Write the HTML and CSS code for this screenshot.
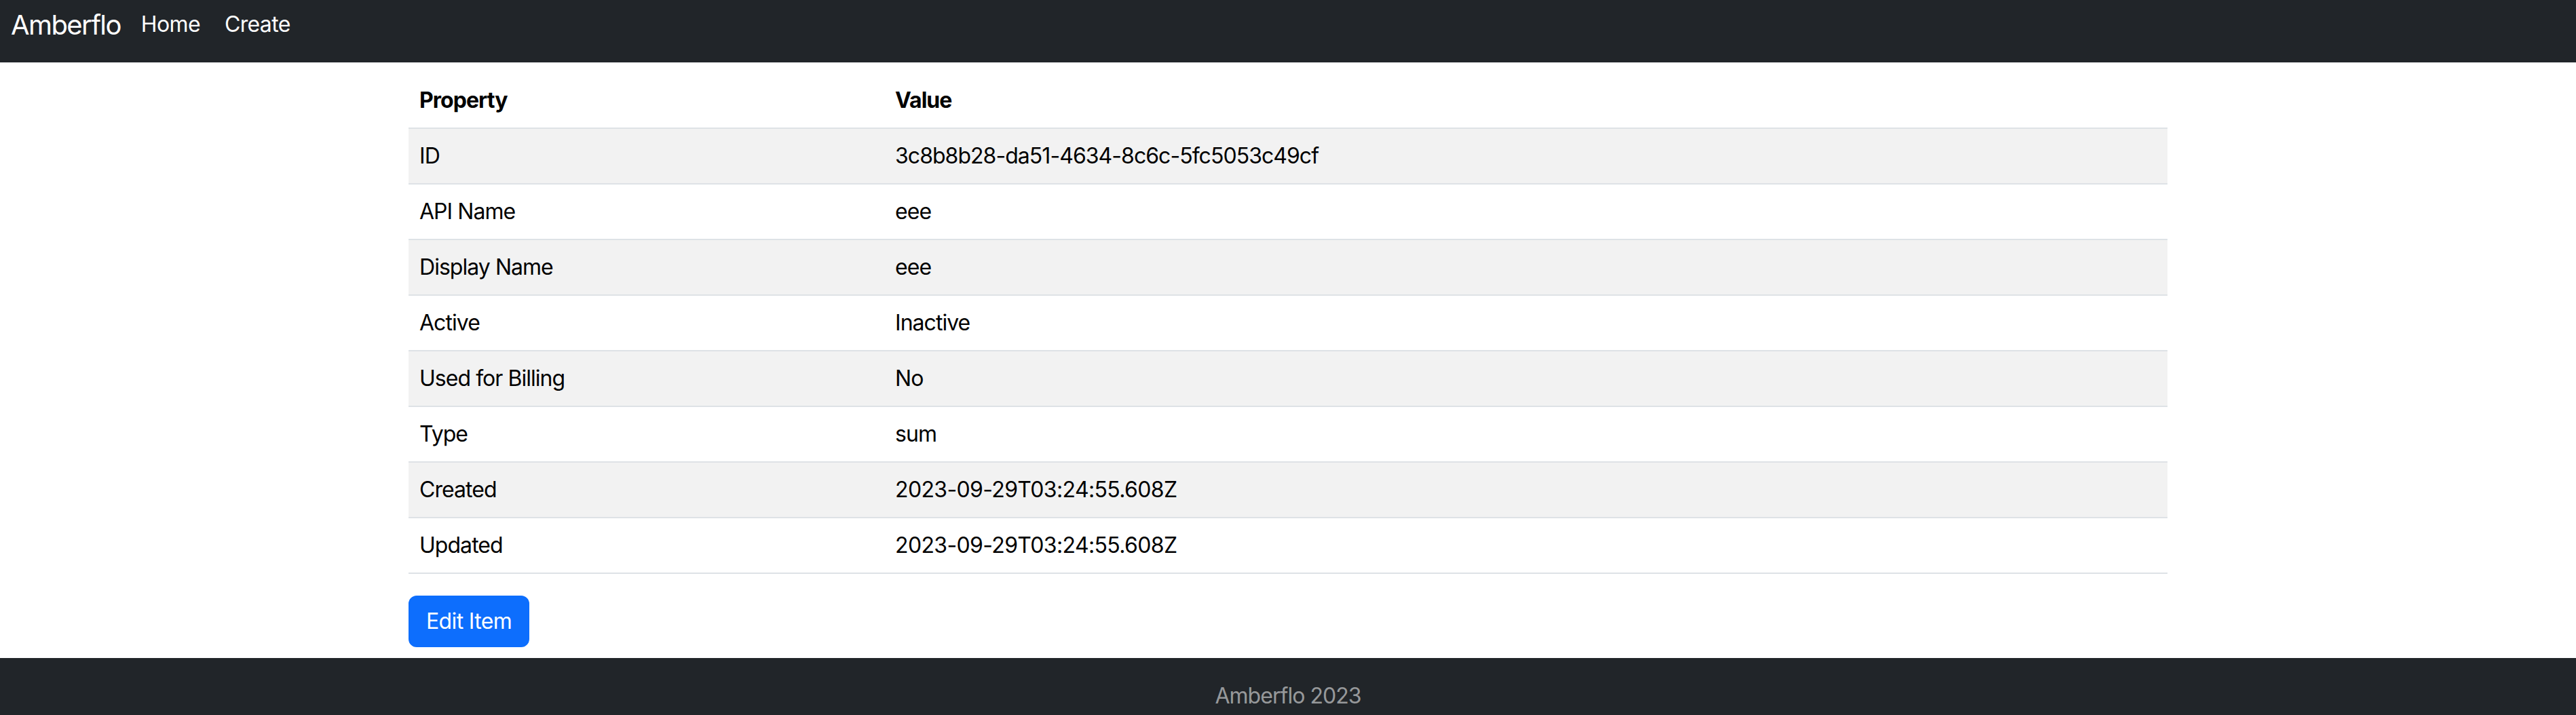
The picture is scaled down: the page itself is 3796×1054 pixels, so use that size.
FILE: index.html
```html
<!DOCTYPE html>
<html lang="en">
<head>
<meta charset="utf-8">
<title>Amberflo</title>
<link rel="stylesheet" href="styles.css">
</head>
<body>
<nav class="navbar">
  <a class="brand" href="#">Amberflo</a>
  <div class="nav-links">
    <a class="nav-link" href="#">Home</a>
    <a class="nav-link" href="#">Create</a>
  </div>
</nav>
<main class="container">
  <table class="table">
    <thead>
      <tr><th class="col-prop">Property</th><th>Value</th></tr>
    </thead>
    <tbody>
      <tr class="odd"><td>ID</td><td>3c8b8b28-da51-4634-8c6c-5fc5053c49cf</td></tr>
      <tr><td>API Name</td><td>eee</td></tr>
      <tr class="odd"><td>Display Name</td><td>eee</td></tr>
      <tr><td>Active</td><td>Inactive</td></tr>
      <tr class="odd"><td>Used for Billing</td><td>No</td></tr>
      <tr><td>Type</td><td>sum</td></tr>
      <tr class="odd"><td>Created</td><td class="num">2023-09-29T03:24:55.608Z</td></tr>
      <tr><td>Updated</td><td class="num">2023-09-29T03:24:55.608Z</td></tr>
    </tbody>
  </table>
  <button class="btn" type="button">Edit Item</button>
</main>
<footer class="footer">Amberflo 2023</footer>
</body>
</html>
```

FILE: styles.css
```css
* { box-sizing: border-box; }
html, body { margin: 0; padding: 0; }
body {
  font-family: Inter, "Liberation Sans", Arial, sans-serif;
  font-size: 32px;
  line-height: 48px;
  letter-spacing: -0.03em;
  color: #000;
  background: #fff;
}
a { text-decoration: none; }

.navbar {
  height: 92px;
  background: #212529;
  display: flex;
  align-items: flex-start;
  padding: 0 16px;
}
.brand {
  color: #fff;
  font-size: 40px;
  line-height: 60px;
  letter-spacing: -0.04em;
  margin-top: 7px;
  margin-right: 30px;
}
.nav-links {
  display: flex;
  gap: 36px;
  margin-top: 12px;
}
.nav-link {
  color: #fff;
  font-size: 32px;
  line-height: 48px;
  letter-spacing: -0.02em;
}

.container {
  width: 2592px;
  margin: 16px auto 16px;
}
.table {
  width: 100%;
  border-collapse: collapse;
  margin-bottom: 32px;
}
.table th, .table td {
  text-align: left;
  padding: 16px;
  border-bottom: 2px solid #dee2e6;
  vertical-align: top;
}
.table th { font-weight: 700; }
.col-prop { width: 701px; }
.table td.num { letter-spacing: -0.02em; }
.table tr.odd td { background: #f2f2f2; }

.btn {
  font-family: inherit;
  font-size: 32px;
  line-height: 48px;
  letter-spacing: -0.02em;
  color: #fff;
  background: #0d6efd;
  border: 2px solid #0d6efd;
  border-radius: 12px;
  padding: 12px 24px;
  cursor: pointer;
  display: block;
}

.footer {
  background: #212529;
  color: rgba(255, 255, 255, 0.55);
  text-align: center;
  padding: 32px 0;
}
```
